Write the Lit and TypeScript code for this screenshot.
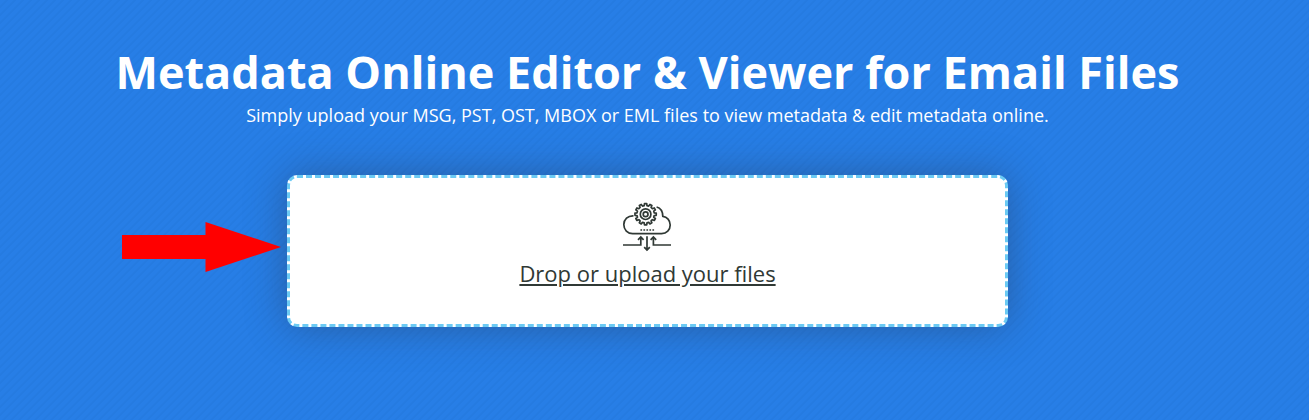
import { LitElement, html, css } from "lit";
import { customElement } from "lit/decorators.js";

const TEETH = 12;

function gearPath(cx: number, cy: number, outer: number, inner: number): string {
  const step = (Math.PI * 2) / TEETH;
  const points: string[] = [];
  for (let i = 0; i < TEETH; i++) {
    const mid = i * step - Math.PI / 2;
    const corners: [number, number][] = [
      [-0.3, inner],
      [-0.2, outer],
      [0.2, outer],
      [0.3, inner],
    ];
    for (const [offset, r] of corners) {
      const a = mid + offset * step;
      points.push(`${(cx + r * Math.cos(a)).toFixed(2)} ${(cy + r * Math.sin(a)).toFixed(2)}`);
    }
  }
  return `M${points.join("L")}Z`;
}

@customElement("upload-icon")
class UploadIcon extends LitElement {
  static styles = css`
    :host { display: block; width: 48px; height: 48px; margin-right: 1px; }
    svg { display: block; overflow: visible; }
  `;
  render() {
    return html`<svg width="48" height="48" viewBox="0 0 48 48" fill="none" stroke="#303935" stroke-width="1.7" stroke-linejoin="round">
      <path d=${gearPath(22.6, 11.2, 10.7, 8.7)} />
      <circle cx="22.6" cy="11.2" r="5.3" />
      <circle cx="22.6" cy="11.2" r="2.4" />
      <path d="M10.5 12.8C4.8 12.5.8 16.5.8 21.6c0 5.2 3.8 9 8.8 9h29c5 0 8.6-3.6 8.6-8.5 0-4.8-3.2-8.2-7.4-8.7C39.8 8.2 37.4 5 33.6 4" />
      <path d="M17.4 27h14" stroke-width="1.6" stroke-dasharray="1.7 1.3" />
      <path d="M0 42h17.8V34M15 36.8l2.8-2.9 2.8 2.9M24 33.3v13.5M21.2 44.2l2.8 2.9 2.8-2.9M48 42H30.4V34M27.6 36.8l2.8-2.9 2.8 2.9" stroke-linejoin="miter" />
    </svg>`;
  }
}

@customElement("app-root")
class AppRoot extends LitElement {
  static styles = css`
    :host { display: block; }
    .hero {
      box-sizing: border-box;
      height: 420px;
      padding: 41px 14px 0 0;
      display: flex;
      flex-direction: column;
      align-items: center;
      overflow: hidden;
      position: relative;
      color: #fff;
      font-family: "Open Sans", "Noto Sans", sans-serif;
      background: repeating-linear-gradient(135deg, #277ee6 0 3.6px, #257be1 4.4px 5.657px);
    }
    h1 { margin: 0; font-size: 45px; line-height: 62px; font-weight: 700; white-space: nowrap; }
    p { margin: 0; font-size: 18px; line-height: 25px; white-space: nowrap; }
    .drop {
      box-sizing: border-box;
      width: 721px;
      height: 152px;
      margin-top: 47px;
      padding-top: 25px;
      border: 3px dashed #6bcaf4;
      border-radius: 10px;
      background: #fff;
      box-shadow: 0 0 40px rgba(40, 50, 70, 0.42);
      display: flex;
      flex-direction: column;
      align-items: center;
    }
    .label {
      margin-top: 7px;
      color: #303935;
      font-size: 22px;
      line-height: 30px;
      font-weight: 400;
      white-space: nowrap;
      text-decoration: underline;
    }
    .pointer { position: absolute; left: 122px; top: 222px; }
  `;
  render() {
    return html`<main class="hero">
      <h1>Metadata Online Editor &amp; Viewer for Email Files</h1>
      <p>Simply upload your MSG, PST, OST, MBOX or EML files to view metadata &amp; edit metadata online.</p>
      <section class="drop">
        <upload-icon></upload-icon>
        <span class="label">Drop or upload your files</span>
      </section>
      <svg class="pointer" width="159" height="50" viewBox="0 0 159 50">
        <path d="M0 13h83.5V0L159 25 83.5 50V37H0z" fill="#f00" />
      </svg>
    </main>`;
  }
}
